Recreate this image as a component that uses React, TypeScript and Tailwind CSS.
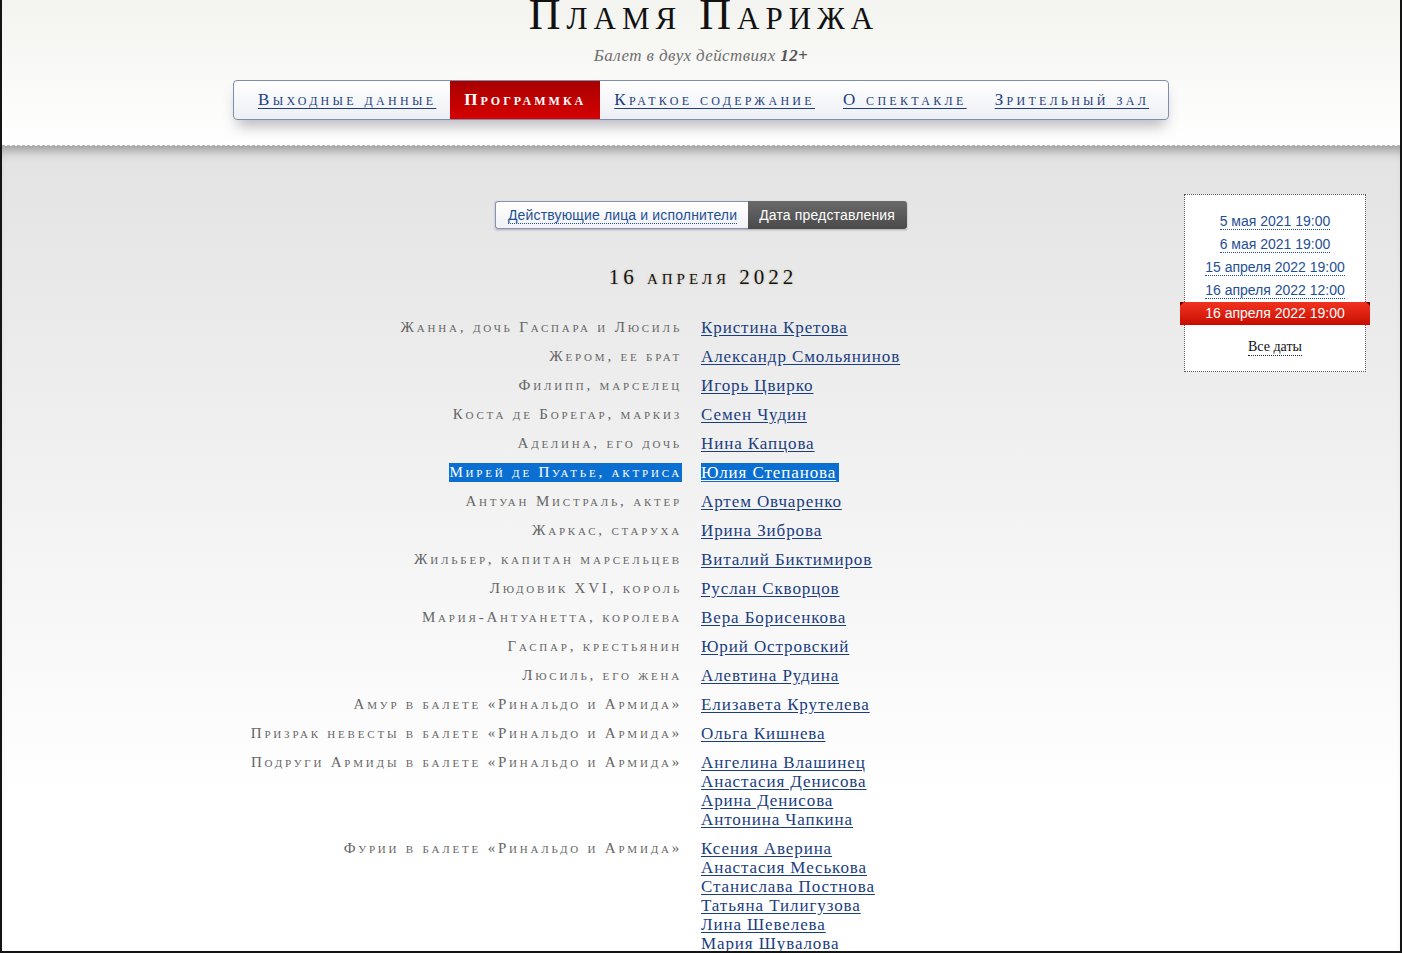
const SERIF = "font-['Liberation_Serif',serif]"
const SANS = "font-['Liberation_Sans',Arial,sans-serif]"

const NAV = [
  { label: 'Выходные данные' },
  { label: 'Программка', active: true },
  { label: 'Краткое содержание' },
  { label: 'О спектакле' },
  { label: 'Зрительный зал' },
]

const DATES = [
  { label: '5 мая 2021 19:00' },
  { label: '6 мая 2021 19:00' },
  { label: '15 апреля 2022 19:00' },
  { label: '16 апреля 2022 12:00' },
  { label: '16 апреля 2022 19:00', active: true },
]

const CAST: { role: string; names: string[]; selected?: boolean }[] = [
  { role: 'Жанна, дочь Гаспара и Люсиль', names: ['Кристина Кретова'] },
  { role: 'Жером, ее брат', names: ['Александр Смольянинов'] },
  { role: 'Филипп, марселец', names: ['Игорь Цвирко'] },
  { role: 'Коста де Борегар, маркиз', names: ['Семен Чудин'] },
  { role: 'Аделина, его дочь', names: ['Нина Капцова'] },
  { role: 'Мирей де Пуатье, актриса', names: ['Юлия Степанова'], selected: true },
  { role: 'Антуан Мистраль, актер', names: ['Артем Овчаренко'] },
  { role: 'Жаркас, старуха', names: ['Ирина Зиброва'] },
  { role: 'Жильбер, капитан марсельцев', names: ['Виталий Биктимиров'] },
  { role: 'Людовик XVI, король', names: ['Руслан Скворцов'] },
  { role: 'Мария-Антуанетта, королева', names: ['Вера Борисенкова'] },
  { role: 'Гаспар, крестьянин', names: ['Юрий Островский'] },
  { role: 'Люсиль, его жена', names: ['Алевтина Рудина'] },
  { role: 'Амур в балете «Ринальдо и Армида»', names: ['Елизавета Крутелева'] },
  { role: 'Призрак невесты в балете «Ринальдо и Армида»', names: ['Ольга Кишнева'] },
  {
    role: 'Подруги Армиды в балете «Ринальдо и Армида»',
    names: ['Ангелина Влашинец', 'Анастасия Денисова', 'Арина Денисова', 'Антонина Чапкина'],
  },
  {
    role: 'Фурии в балете «Ринальдо и Армида»',
    names: [
      'Ксения Аверина',
      'Анастасия Меськова',
      'Станислава Постнова',
      'Татьяна Тилигузова',
      'Лина Шевелева',
      'Мария Шувалова',
    ],
  },
]

export default function App() {
  return (
    <div className="h-[953px] overflow-hidden bg-[#141414] pl-[2px] pr-[2px] pb-[2px]">
      <div className="flex h-full flex-col overflow-hidden bg-white">
        {/* Header */}
        <header className="h-[146px] shrink-0 border-b border-dashed border-[#b8b8b8] bg-gradient-to-b from-[#f3f3ef] to-white">
          <h1
            className={`${SERIF} -mt-[7px] pl-[6px] text-center text-[44px] leading-none tracking-[6px] text-[#111] [font-variant:small-caps]`}
          >
            Пламя Парижа
          </h1>
          <p
            className={`${SERIF} mt-[9px] text-center text-[17px] italic leading-[20px] tracking-[0.4px] text-[#6f6f6f]`}
          >
            Балет в двух действиях <b className="font-bold text-[#555]">12+</b>
          </p>
          <nav className="mx-auto mt-[14px] flex h-[40px] w-[936px] items-stretch rounded-[4px] border border-[#7f8cab] bg-gradient-to-b from-white to-[#edeff4] px-[10px] shadow-[0_10px_14px_-4px_rgba(60,60,80,0.35)]">
            {NAV.map((item) =>
              item.active ? (
                <span
                  key={item.label}
                  className={`${SERIF} flex items-center whitespace-nowrap bg-gradient-to-b from-[#a80000] to-[#d60000] px-[14px] text-[17px] font-bold tracking-[3px] text-white [font-variant:small-caps]`}
                >
                  {item.label}
                </span>
              ) : (
                <a
                  key={item.label}
                  href="#"
                  className={`${SERIF} flex items-center whitespace-nowrap px-[14px] text-[17px] tracking-[3.3px] text-[#1d3f7c] underline underline-offset-[3px] [font-variant:small-caps]`}
                >
                  {item.label}
                </a>
              ),
            )}
          </nav>
        </header>

        {/* Body */}
        <main className="grid flex-1 grid-cols-[1fr_860px_1fr] bg-[linear-gradient(to_bottom,#e3e3e3,#ffffff_650px)] shadow-[inset_0_12px_12px_-8px_rgba(0,0,0,0.35)]">
          <div />

          <div className="flex flex-col items-center pt-[55px]">
            {/* Tabs */}
            <div className={`${SANS} flex h-[28px] text-[14px] tracking-[0.15px] shadow-[0_1px_2px_rgba(0,0,0,0.25)]`}>
              <a
                href="#"
                className="flex items-center rounded-l-[3px] border border-r-0 border-[#8593b3] bg-gradient-to-b from-white to-[#f1f2f6] pl-[12px] pr-[11px]"
              >
                <span className="border-b border-dotted border-[#1f4f95] leading-[16px] text-[#1f4f95]">
                  Действующие лица и исполнители
                </span>
              </a>
              <span className="flex items-center rounded-r-[3px] bg-gradient-to-b from-[#6a6a6a] to-[#4a4a4a] pl-[11px] pr-[12px] text-white">
                Дата представления
              </span>
            </div>

            {/* Date heading */}
            <h2
              className={`${SERIF} mt-[34px] pl-[4px] text-[21px] leading-[28px] tracking-[4px] text-[#111] [font-variant:small-caps] [text-shadow:0_0_3px_rgba(150,120,60,0.35)]`}
            >
              16 апреля 2022
            </h2>

            {/* Cast */}
            <div className="mt-[27px] w-full">
              {CAST.map((row) => (
                <div key={row.role} className="flex pb-[10px]">
                  <div className="flex w-[409px] shrink-0 justify-end">
                    <span
                      className={`${SERIF} -mr-[2px] whitespace-nowrap text-[15px] leading-[19px] tracking-[2.8px] [font-variant:small-caps] ${
                        row.selected ? 'bg-[#0b6fd1] text-white' : 'text-[#666]'
                      }`}
                    >
                      {row.role}
                    </span>
                  </div>
                  <div className="flex flex-col items-start pl-[21px]">
                    {row.names.map((name) => (
                      <a
                        key={name}
                        href="#"
                        className={`${SERIF} whitespace-nowrap text-[17px] leading-[19px] tracking-[0.9px] underline underline-offset-[2px] ${
                          row.selected ? 'bg-[#0b6fd1] pr-[3px] text-white' : 'text-[#1a3d80]'
                        }`}
                      >
                        {name}
                      </a>
                    ))}
                  </div>
                </div>
              ))}
            </div>
          </div>

          {/* Date list */}
          <div className="flex justify-end pr-[34px] pt-[48px]">
            <aside className="h-[178px] w-[182px] border border-dotted border-[#555] bg-white pt-[15px]">
              <ul className={`${SANS} text-[14px]`}>
                {DATES.map((d) =>
                  d.active ? (
                    <li
                      key={d.label}
                      className="relative -mx-[5px] flex h-[23px] items-center justify-center bg-gradient-to-b from-[#f2321f] to-[#c70a00] text-white"
                    >
                      <span className="absolute left-0 top-0 border-r-[4px] border-t-[4px] border-r-transparent border-t-[#6d0000]" />
                      <span className="absolute right-0 top-0 border-l-[4px] border-t-[4px] border-l-transparent border-t-[#6d0000]" />
                      {d.label}
                    </li>
                  ) : (
                    <li key={d.label} className="flex h-[23px] items-center justify-center">
                      <a href="#" className="border-b border-dotted border-[#1f4f95] leading-[16px] text-[#1f4f95]">
                        {d.label}
                      </a>
                    </li>
                  ),
                )}
              </ul>
              <div className="mt-[13px] flex justify-center">
                <a
                  href="#"
                  className={`${SERIF} border-b border-dotted border-[#222] text-[14px] leading-[17px] text-[#111]`}
                >
                  Все даты
                </a>
              </div>
            </aside>
          </div>
        </main>
      </div>
    </div>
  )
}
